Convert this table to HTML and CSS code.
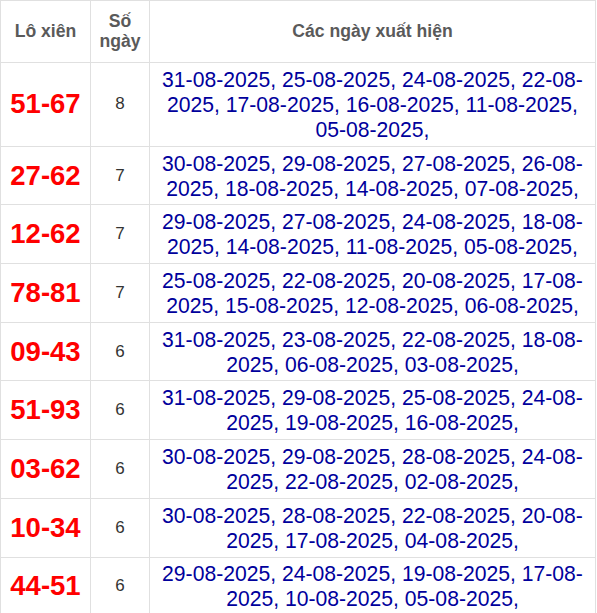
FILE: index.html
```html
<!DOCTYPE html>
<html lang="vi">

<head>
    <meta charset="UTF-8">
    <meta name="viewport" content="width=device-width, initial-scale=1.0">
    <title>Lô xiên</title>
    <link rel="stylesheet" href="styles.css">
</head>

<body>
    <table class="lo-table">
        <colgroup>
            <col class="col-pair">
            <col class="col-count">
            <col class="col-dates">
        </colgroup>
        <thead>
            <tr>
                <th>Lô xiên</th>
                <th>Số ngày</th>
                <th>Các ngày xuất hiện</th>
            </tr>
        </thead>
        <tbody>
            <tr>
                <td class="pair">51-67</td>
                <td class="count">8</td>
                <td class="dates">31-08-2025, 25-08-2025, 24-08-2025, 22-08-2025, 17-08-2025, 16-08-2025, 11-08-2025, 05-08-2025, </td>
            </tr>
            <tr>
                <td class="pair">27-62</td>
                <td class="count">7</td>
                <td class="dates">30-08-2025, 29-08-2025, 27-08-2025, 26-08-2025, 18-08-2025, 14-08-2025, 07-08-2025, </td>
            </tr>
            <tr>
                <td class="pair">12-62</td>
                <td class="count">7</td>
                <td class="dates">29-08-2025, 27-08-2025, 24-08-2025, 18-08-2025, 14-08-2025, 11-08-2025, 05-08-2025, </td>
            </tr>
            <tr>
                <td class="pair">78-81</td>
                <td class="count">7</td>
                <td class="dates">25-08-2025, 22-08-2025, 20-08-2025, 17-08-2025, 15-08-2025, 12-08-2025, 06-08-2025, </td>
            </tr>
            <tr>
                <td class="pair">09-43</td>
                <td class="count">6</td>
                <td class="dates">31-08-2025, 23-08-2025, 22-08-2025, 18-08-2025, 06-08-2025, 03-08-2025, </td>
            </tr>
            <tr>
                <td class="pair">51-93</td>
                <td class="count">6</td>
                <td class="dates">31-08-2025, 29-08-2025, 25-08-2025, 24-08-2025, 19-08-2025, 16-08-2025, </td>
            </tr>
            <tr>
                <td class="pair">03-62</td>
                <td class="count">6</td>
                <td class="dates">30-08-2025, 29-08-2025, 28-08-2025, 24-08-2025, 22-08-2025, 02-08-2025, </td>
            </tr>
            <tr>
                <td class="pair">10-34</td>
                <td class="count">6</td>
                <td class="dates">30-08-2025, 28-08-2025, 22-08-2025, 20-08-2025, 17-08-2025, 04-08-2025, </td>
            </tr>
            <tr>
                <td class="pair">44-51</td>
                <td class="count">6</td>
                <td class="dates">29-08-2025, 24-08-2025, 19-08-2025, 17-08-2025, 10-08-2025, 05-08-2025, </td>
            </tr>
        </tbody>
    </table>
</body>

</html>
```

FILE: styles.css
```css
body {
    margin: 0;
    background: #fff;
    font-family: "Liberation Sans", Arial, sans-serif;
}

.lo-table {
    width: 596px;
    border-collapse: collapse;
    table-layout: fixed;
}

.col-pair {
    width: 90px;
}

.col-count {
    width: 59px;
}

.lo-table th,
.lo-table td {
    border: 1px solid #e0e0e0;
    text-align: center;
    vertical-align: middle;
}

.lo-table th {
    padding: 9.5px 4px 11.5px;
    font-size: 17.6px;
    line-height: 20px;
    font-weight: bold;
    color: #5a5a5a;
}

.lo-table td {
    padding: 3.85px 6px;
}

.pair {
    font-size: 27.5px;
    font-weight: bold;
    color: #ff0000;
}

.count {
    font-size: 17px;
    color: #333;
}

.dates {
    font-size: 21.15px;
    line-height: 25px;
    color: #00009c;
}
```
